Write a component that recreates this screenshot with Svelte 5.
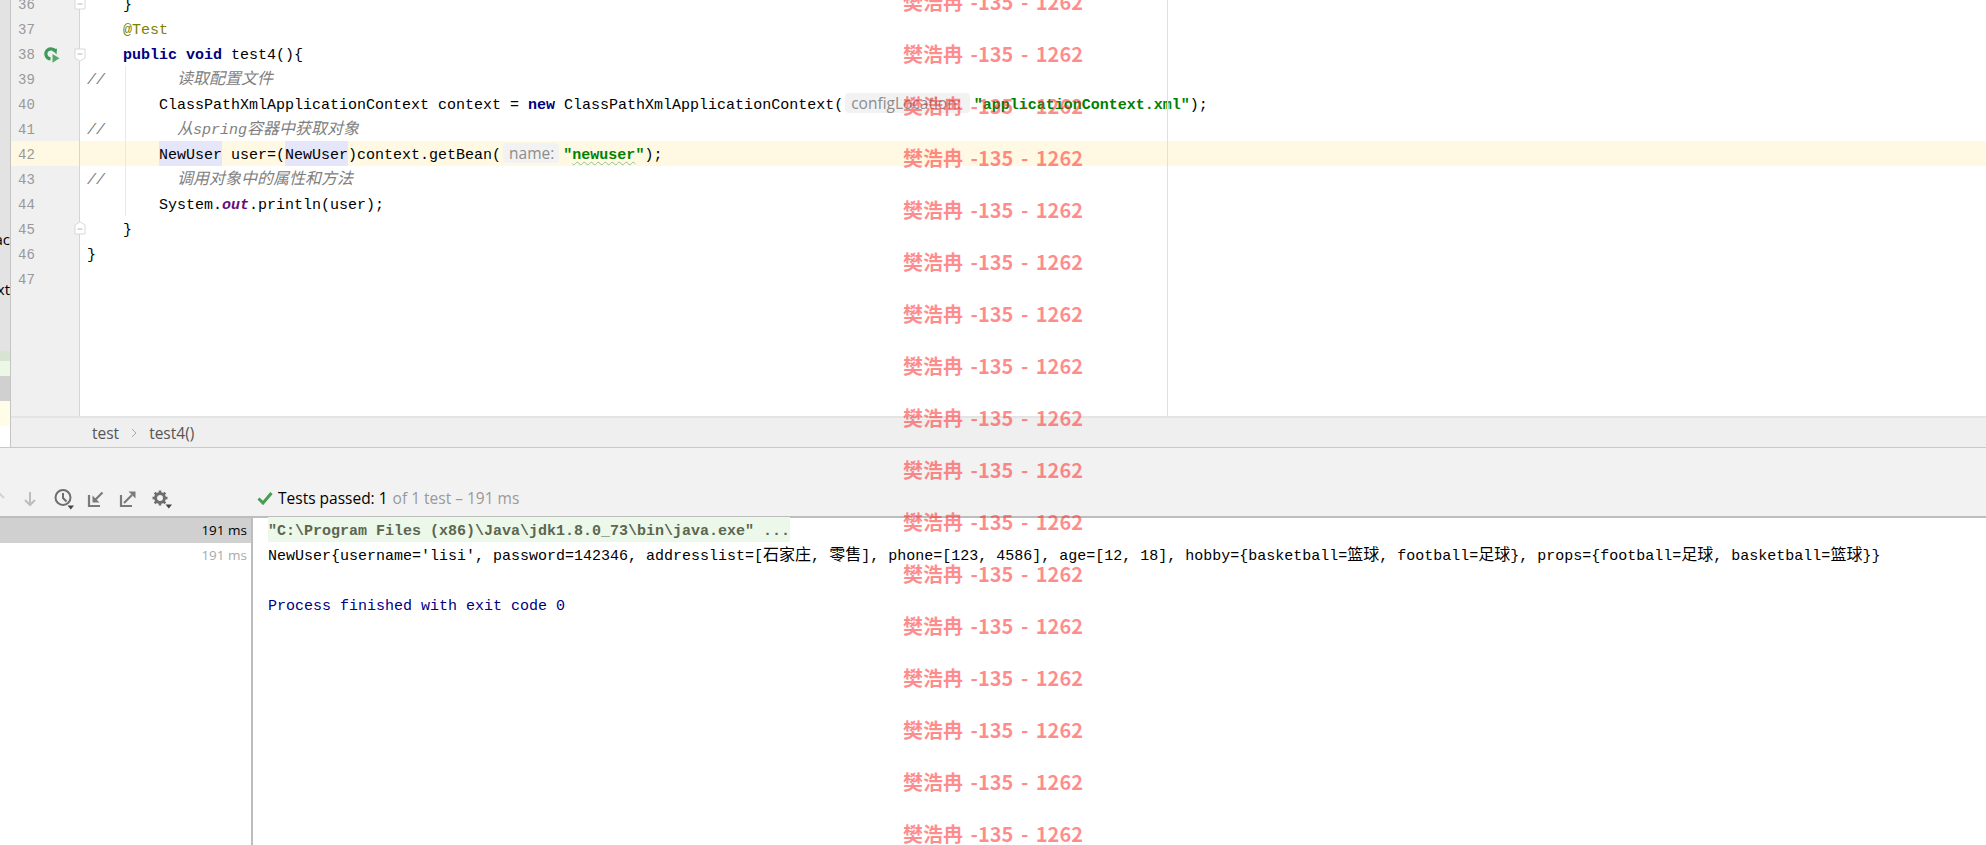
<script lang="ts">
  // watermark repeats down the whole page
  const marks = Array.from({ length: 17 }, (_, i) => i);
  const numbers = [36, 37, 38, 39, 40, 41, 42, 43, 44, 45, 46, 47];
  // svelte trims leading whitespace, so indents go through expressions
  const tab = '    ';
  const tab2 = '        ';
  const slashes = '//        ';
</script>

<div class="page">
  <div class="top">
    <div class="side">
      <span class="side-text t1">ac</span>
      <span class="side-text t2">xt</span>
      <div class="sr a"></div>
      <div class="sr b"></div>
      <div class="sr c"></div>
      <div class="sr d"></div>
      <div class="sr e"></div>
    </div>

    <div class="main">
      <div class="editor">
        <div class="gutter">
          {#each numbers as n}
            <div class="num" class:current={n === 42}>
              <span class="num-text">{n}</span>
              {#if n === 38}
                <svg class="run" width="16" height="16" viewBox="0 0 16 16">
                  <path d="M11 4A5 5 0 1 0 6.500 11.800" fill="none" stroke="#3f9a58" stroke-width="3.200" />
                  <path d="M7.500 1.800 13 1.800 12.500 7.500z" fill="#3f9a58" />
                  <path d="M8.500 7 15.500 11.300 8.500 15.800z" fill="#59a869" />
                </svg>
                <svg class="fold open" width="12" height="14" viewBox="0 0 12 14">
                  <path d="M1 1V10L6 13.200 11 10V1z" fill="#fff" stroke="#d8d8d8" />
                  <path d="M3.500 6H8.500" stroke="#b5b5b5" />
                </svg>
              {/if}
              {#if n === 36 || n === 45}
                <svg class="fold" width="12" height="14" viewBox="0 0 12 14">
                  <path d="M1 13V4L6 .8 11 4V13z" fill="#fff" stroke="#d8d8d8" />
                  <path d="M3.500 8H8.500" stroke="#b5b5b5" />
                </svg>
              {/if}
            </div>
          {/each}
        </div>

        <div class="code">
          <div class="line">{tab}{'}'}</div>
          <div class="line">{tab}<span class="anno">@Test</span></div>
          <div class="line">{tab}<span class="kw">public void</span> test4(){'{'}</div>
          <div class="line"><span class="com">{slashes}<span class="cn">读取配置文件</span></span></div>
          <div class="line">{tab2}ClassPathXmlApplicationContext context = <span class="kw">new</span> ClassPathXmlApplicationContext(<span class="hint long">configLocation:</span><span class="str">"applicationContext.xml"</span>);</div>
          <div class="line"><span class="com">{slashes}<span class="cn">从</span>spring<span class="cn">容器中获取对象</span></span></div>
          <div class="line current">{tab2}<span class="usage">NewUser</span> user=(<span class="usage">NewUser</span>)context.getBean(<span class="hint short">name:</span><span class="str">"<span class="typo">newuser</span>"</span>);</div>
          <div class="line"><span class="com">{slashes}<span class="cn">调用对象中的属性和方法</span></span></div>
          <div class="line">{tab2}System.<span class="field">out</span>.println(user);</div>
          <div class="line">{tab}{'}'}</div>
          <div class="line">{'}'}</div>
          <div class="line"></div>
          <div class="guide"></div>
          <div class="margin-line"></div>
        </div>
      </div>

      <div class="crumbs">
        <span>test</span>
        <svg width="6" height="10" viewBox="0 0 6 10"><path d="M1 1 5 5 1 9" fill="none" stroke="#aaa" /></svg>
        <span>test4()</span>
      </div>
    </div>
  </div>

  <div class="toolbar">
    <div class="tools">
      <svg width="18" height="18" viewBox="0 0 18 18" class="cut"><path d="M9 16V3M4 8l5-5 5 5" fill="none" stroke="#bdbdbd" stroke-width="2" /></svg>
      <svg width="18" height="18" viewBox="0 0 18 18"><path d="M9 2V15M4 10l5 5 5-5" fill="none" stroke="#bdbdbd" stroke-width="2" /></svg>
      <svg width="22" height="22" viewBox="0 0 22 22">
        <circle cx="11" cy="9.500" r="7.500" fill="none" stroke="#6e6e6e" stroke-width="2" />
        <path d="M11 5V10L14.500 13.500" fill="none" stroke="#6e6e6e" stroke-width="2" />
        <path d="M15.500 17.500h6.500l-3.250 4z" fill="#444" />
      </svg>
      <svg width="18" height="18" viewBox="0 0 18 18">
        <path d="M2 5V16H13" fill="none" stroke="#7a7a7a" stroke-width="2.200" />
        <path d="M15.500 2.500 7 11" fill="none" stroke="#7a7a7a" stroke-width="2.200" />
        <path d="M5.500 5.500V12.500H12.500z" fill="#7a7a7a" />
      </svg>
      <svg class="nudge" width="18" height="18" viewBox="0 0 18 18">
        <path d="M2 5V16H13" fill="none" stroke="#7a7a7a" stroke-width="2.200" />
        <path d="M5 13 13 5" fill="none" stroke="#7a7a7a" stroke-width="2.200" />
        <path d="M9.500 1.500H16.500V8.500z" fill="#7a7a7a" />
      </svg>
      <svg class="nudge" width="22" height="20" viewBox="0 0 22 20">
        <circle cx="9" cy="9" r="4.500" fill="none" stroke="#6e6e6e" stroke-width="3" />
        <path d="M9 1.500V4M9 14V16.500M1.500 9H4M14 9H16.500M3.700 3.700 5.500 5.500M12.500 12.500 14.300 14.300M14.300 3.700 12.500 5.500M5.500 12.500 3.700 14.300" stroke="#6e6e6e" stroke-width="2.600" />
        <path d="M14.500 15.500h6.500l-3.250 4z" fill="#444" />
      </svg>
    </div>
    <div class="status">
      <svg width="16" height="14" viewBox="0 0 16 14"><path d="M1.500 7.500 6 12 14.500 2" fill="none" stroke="#499c54" stroke-width="3" /></svg>
      <span class="passed">Tests passed: 1</span>
      <span class="dim">of 1 test – 191 ms</span>
    </div>
  </div>

  <div class="results">
    <div class="tree">
      <div class="row selected">191 ms</div>
      <div class="row">191 ms</div>
    </div>
    <div class="console">
      <div class="out"><span class="cmd-text">"C:\Program Files (x86)\Java\jdk1.8.0_73\bin\java.exe" ...</span></div>
      <div class="out">NewUser{'{'}username='lisi', password=142346, addresslist=[<span class="cn">石家庄</span>, <span class="cn">零售</span>], phone=[123, 4586], age=[12, 18], hobby={'{'}basketball=<span class="cn">篮球</span>, football=<span class="cn">足球</span>{'}'}, props={'{'}football=<span class="cn">足球</span>, basketball=<span class="cn">篮球</span>{'}'}{'}'}</div>
      <div class="out"></div>
      <div class="out exit">Process finished with exit code 0</div>
    </div>
  </div>

  <div class="marks">
    {#each marks as m (m)}
      <div class="mark">樊浩冉 -135 - 1262</div>
    {/each}
  </div>
</div>

<style>
  :global(body) {
    margin: 0;
    background: #fff;
  }

  .page {
    position: relative;
    display: flex;
    flex-direction: column;
    width: 1986px;
    height: 845px;
    overflow: hidden;
    background: #fff;
    font-family: "Liberation Mono", "Noto Sans CJK SC", monospace;
    font-size: 15px;
    color: #000;
  }

  .top {
    display: flex;
    height: 447px;
    border-bottom: 1px solid #c9c9c9;
    flex: none;
    box-sizing: content-box;
  }

  .side {
    position: relative;
    flex: none;
    width: 10px;
    background: #e3e3e3;
    border-right: 1px solid #c4c4c4;
    display: flex;
    flex-direction: column;
    justify-content: flex-end;
    overflow: hidden;
  }

  .side-text {
    position: absolute;
    right: 0;
    font-family: "Open Sans", sans-serif;
    font-size: 15px;
    line-height: 20px;
  }

  .t1 {
    top: 229px;
  }

  .t2 {
    top: 279px;
  }

  .sr {
    height: 25px;
  }

  .sr.a {
    height: 10px;
    background: #d8e3d0;
  }

  .sr.b {
    height: 15px;
    background: #ecf8e6;
  }

  .sr.c {
    background: #d0d0d0;
  }

  .sr.d {
    background: #fffde8;
  }

  .sr.e {
    height: 21px;
    background: #fff;
  }

  .main {
    flex: 1;
    min-width: 0;
    display: flex;
    flex-direction: column;
  }

  .editor {
    flex: 1;
    min-height: 0;
    display: flex;
    overflow: hidden;
  }

  .gutter {
    flex: none;
    width: 68px;
    background: #f0f0f0;
    border-right: 1px solid #d5d5d5;
  }

  .num {
    position: relative;
    height: 25px;
    line-height: 29px;
    padding-left: 7px;
    color: #999;
    font-size: 14px;
  }

  .num:first-child {
    margin-top: -9px;
  }

  .num.current {
    background: #fff9e3;
  }

  .run {
    position: absolute;
    left: 33px;
    top: 6px;
  }

  .fold {
    position: absolute;
    right: -7px;
    top: 5px;
  }

  .fold.open {
    top: 7px;
  }

  .code {
    position: relative;
    flex: 1;
    min-width: 0;
  }

  .line {
    height: 25px;
    line-height: 29px;
    white-space: pre;
    padding-left: 7px;
  }

  .line:first-child {
    margin-top: -9px;
  }

  .line.current {
    background: #fff9e3;
  }

  .guide {
    position: absolute;
    left: 45px;
    top: 66px;
    width: 1px;
    height: 150px;
    background: #e8e8e8;
  }

  .margin-line {
    position: absolute;
    left: 1087px;
    top: 0;
    bottom: 0;
    width: 1px;
    background: #e0e0e0;
  }

  .kw {
    color: #000080;
    font-weight: bold;
  }

  .anno {
    color: #808000;
  }

  .com {
    color: #808080;
    font-style: italic;
  }

  .cn {
    font-family: "Noto Sans CJK SC", sans-serif;
    font-size: 16px;
    line-height: 1;
  }

  .str {
    color: #008000;
    font-weight: bold;
  }

  .field {
    color: #660e7a;
    font-weight: bold;
    font-style: italic;
  }

  /* paddings stretch the inline background to the full row */
  .usage {
    background: #e6e6fa;
    padding: 6px 0 2px;
  }

  .typo {
    text-decoration: underline wavy #8cc58c 1px;
    text-underline-offset: 2px;
  }

  .hint {
    display: inline-block;
    height: 20px;
    line-height: 20px;
    margin: 0 4px 0 2px;
    padding: 0 6px;
    border-radius: 4px;
    background: #f2f2f2;
    color: #8c8c8c;
    font-family: "Open Sans", sans-serif;
    font-size: 15.500px;
    font-weight: normal;
  }

  .hint.long {
    padding-right: 9px;
  }

  .hint.short {
    padding-right: 5px;
  }

  .crumbs {
    flex: none;
    display: flex;
    align-items: center;
    gap: 12px;
    height: 29px;
    padding-left: 81px;
    background: #efefef;
    border-top: 2px solid #e4e4e4;
    font-family: "Open Sans", sans-serif;
    font-size: 15.500px;
    color: #555;
  }

  .toolbar {
    flex: none;
    display: flex;
    align-items: flex-end;
    height: 70px;
    box-sizing: border-box;
    background: #f2f2f2;
    border-bottom: 2px solid #bdbdbd;
    padding-bottom: 6px;
  }

  .tools {
    display: flex;
    align-items: center;
    gap: 13px;
    width: 267px;
    margin-left: -10px;
    flex: none;
  }

  .nudge {
    margin-left: 1px;
  }

  .cut {
    opacity: 0.6;
  }

  .status {
    display: flex;
    align-items: center;
    gap: 5px;
    padding-bottom: 1px;
    font-family: "Open Sans", sans-serif;
    font-size: 15.500px;
    line-height: 22px;
  }

  .dim {
    color: #999;
  }

  .results {
    flex: 1;
    min-height: 0;
    display: flex;
  }

  .tree {
    flex: none;
    width: 251px;
    border-right: 2px solid #bdbdbd;
    font-family: "Open Sans", sans-serif;
    font-size: 13.500px;
  }

  .row {
    height: 25px;
    line-height: 25px;
    padding-right: 4px;
    text-align: right;
    color: #aaa;
  }

  .row.selected {
    background: #d0d0d0;
    color: #000;
  }

  .console {
    padding-left: 15px;
  }

  .out {
    height: 25px;
    line-height: 28px;
    white-space: pre;
  }

  .cmd-text {
    background: #ecf8e9;
    color: #5c6650;
    font-weight: bold;
    padding: 6px 0 2px;
  }

  .exit {
    color: #000080;
  }

  .marks {
    position: absolute;
    left: 903px;
    top: -18px;
    display: flex;
    flex-direction: column;
    gap: 12px;
    pointer-events: none;
  }

  .mark {
    height: 40px;
    line-height: 40px;
    font-family: "Noto Sans CJK SC", sans-serif;
    font-weight: bold;
    font-size: 20px;
    word-spacing: 3px;
    white-space: nowrap;
    color: rgba(255, 40, 40, 0.53);
  }
</style>
